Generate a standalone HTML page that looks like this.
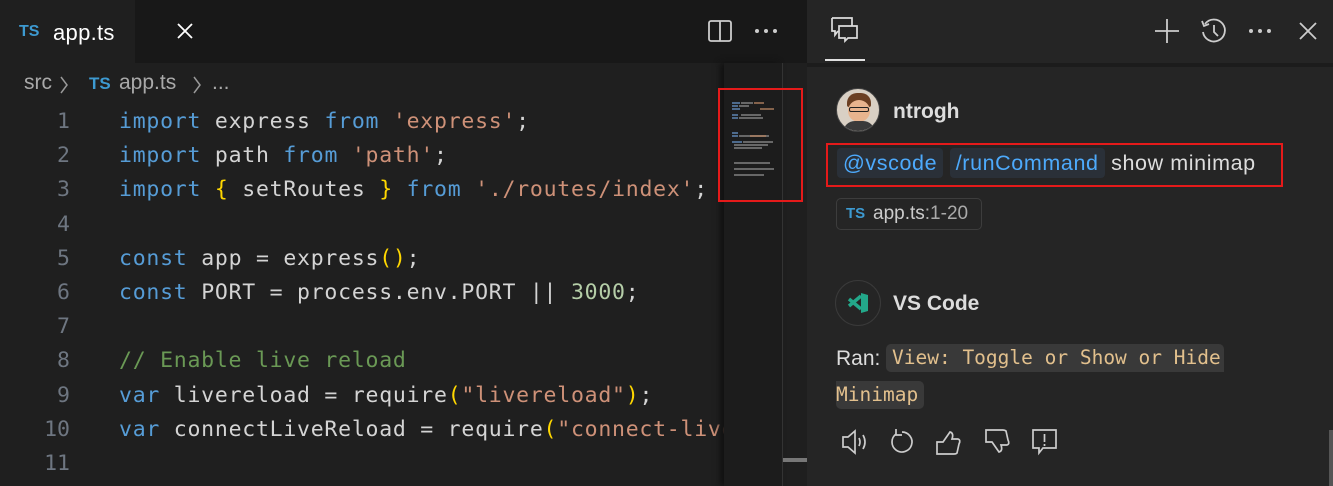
<!DOCTYPE html>
<html><head><meta charset="utf-8"><style>
*{margin:0;padding:0;box-sizing:border-box}
body{width:1333px;height:486px;overflow:hidden;background:#1f1f1f;font-family:"Liberation Sans","DejaVu Sans",sans-serif;position:relative;color:#ccc}
.abs{position:absolute}
.tabbar{left:0;top:0;width:807px;height:63px;background:#181818}
.tab{left:0;top:0;width:135px;height:63px;background:#1f1f1f}
.ts{color:#3d9ad1;font-weight:bold;font-size:16px}
.code{font-family:"DejaVu Sans Mono","Liberation Mono",monospace;font-size:21.5px;white-space:pre;line-height:34.2px}
.k{color:#569cd6}.s{color:#ce9178}.v{color:#d4d4d4}.n{color:#b5cea8}.c{color:#6a9955}.f{color:#dcdcaa}.b{color:#ffd700}.m{color:#da70d6}
.chat{left:807px;top:0;width:526px;height:486px;background:#252525}
.pill{background:#2a3038;color:#4daafc;border-radius:4px;padding:3px 6px}
.mono{font-family:"DejaVu Sans Mono","Liberation Mono",monospace}
.bc{font-size:21px;color:#a9a9a9;top:71px}
</style></head><body>
<div class="abs tabbar"></div>
<div class="abs tab"></div>
<div class="abs ts" style="left:19px;top:23px">TS</div>
<div class="abs" style="left:53px;top:20px;font-size:22px;color:#fff;letter-spacing:0.3px">app.ts</div>
<svg class="abs" style="left:176px;top:22px" width="18" height="18"><path d="M2 2L16 16M16 2L2 16" stroke="#fff" stroke-width="1.8"/></svg>
<svg class="abs" style="left:708px;top:20px" width="24" height="22"><rect x="1" y="1" width="22" height="20" rx="2" fill="none" stroke="#ccc" stroke-width="1.8"/><path d="M12 1V21" stroke="#ccc" stroke-width="1.8"/></svg>
<svg class="abs" style="left:754px;top:28px" width="26" height="6" fill="#ccc"><circle cx="3" cy="3" r="2"/><circle cx="12" cy="3" r="2"/><circle cx="21" cy="3" r="2"/></svg>
<div class="abs bc" style="left:24px">src</div>
<svg class="abs" style="left:58px;top:74px" width="12" height="22"><path d="M3 3L9 11L3 19" fill="none" stroke="#999" stroke-width="1.5"/></svg>
<div class="abs ts" style="left:89px;top:74px;font-size:17px">TS</div>
<div class="abs bc" style="left:119px">app.ts</div>
<svg class="abs" style="left:191px;top:74px" width="12" height="22"><path d="M3 3L9 11L3 19" fill="none" stroke="#999" stroke-width="1.5"/></svg>
<div class="abs bc" style="left:212px">...</div>
<div class="abs code" style="left:30px;top:105px;width:40px;text-align:right;color:#6e7681">1
2
3
4
5
6
7
8
9
10
11</div>
<div class="abs code" style="left:119px;top:105px;width:605px;overflow:hidden;letter-spacing:0.75px"><span class="k">import</span> <span class="v">express</span> <span class="k">from</span> <span class="s">'express'</span><span class="v">;</span>
<span class="k">import</span> <span class="v">path</span> <span class="k">from</span> <span class="s">'path'</span><span class="v">;</span>
<span class="k">import</span> <span class="b">{</span> <span class="v">setRoutes</span> <span class="b">}</span> <span class="k">from</span> <span class="s">'./routes/index'</span><span class="v">;</span>

<span class="k">const</span> <span class="v">app = express</span><span class="b">()</span><span class="v">;</span>
<span class="k">const</span> <span class="v">PORT = process.env.PORT || </span><span class="n">3000</span><span class="v">;</span>

<span class="c">// Enable live reload</span>
<span class="k">var</span> <span class="v">livereload = require</span><span class="b">(</span><span class="s">"livereload"</span><span class="b">)</span><span class="v">;</span>
<span class="k">var</span> <span class="v">connectLiveReload = require</span><span class="b">(</span><span class="s">"connect-live</span>
</div>
<div class="abs" style="left:724px;top:63px;width:58px;height:423px;background:#1c1c1c;box-shadow:-4px 0 6px #111"></div>
<div class="abs" style="left:782px;top:63px;width:1px;height:423px;background:#333"></div>
<div class="abs" style="left:783px;top:458px;width:24px;height:4px;background:#777"></div>
<svg class="abs" style="left:730px;top:100px" width="50" height="80">
<g fill="#5a7ea8" opacity=".8"><rect x="2" y="2" width="8" height="2"/><rect x="2" y="5" width="6" height="2"/><rect x="2" y="8" width="8" height="2"/><rect x="2" y="14" width="6" height="2"/><rect x="2" y="17" width="6" height="2"/><rect x="2" y="32" width="6" height="2"/><rect x="2" y="35" width="6" height="2"/><rect x="2" y="41" width="10" height="2"/></g>
<g fill="#999" opacity=".6"><rect x="11" y="2" width="12" height="2"/><rect x="9" y="5" width="10" height="2"/><rect x="11" y="14" width="20" height="2"/><rect x="9" y="17" width="24" height="2"/><rect x="9" y="35" width="30" height="2"/><rect x="13" y="41" width="30" height="2"/><rect x="4" y="44" width="34" height="2"/><rect x="4" y="47" width="28" height="2"/><rect x="4" y="62" width="36" height="2"/><rect x="4" y="68" width="40" height="2"/><rect x="4" y="74" width="30" height="2"/></g>
<g fill="#b08060" opacity=".7"><rect x="24" y="2" width="10" height="2"/><rect x="30" y="8" width="14" height="2"/><rect x="20" y="35" width="16" height="2"/></g>
</svg>
<div class="abs" style="left:718px;top:88px;width:85px;height:114px;border:2.5px solid #e51a1a"></div>

<div class="abs chat"></div>
<div class="abs" style="left:807px;top:63px;width:526px;height:4px;background:#1c1c1c"></div>
<svg class="abs" style="left:830px;top:16px" width="30" height="28"><path d="M2 2H22V10M2 2V15H5V19L8 15" fill="none" stroke="#ddd" stroke-width="1.7"/><path d="M9 10H27V22H18L15 25V22H9Z" fill="none" stroke="#ddd" stroke-width="1.7"/></svg>
<div class="abs" style="left:825px;top:59px;width:40px;height:2px;background:#e0e0e0"></div>
<svg class="abs" style="left:1154px;top:18px" width="26" height="26"><path d="M13 1V25M1 13H25" stroke="#ccc" stroke-width="1.8"/></svg>
<svg class="abs" style="left:1199px;top:16px" width="30" height="30"><path d="M6 8A11 11 0 1 1 4 16" fill="none" stroke="#ccc" stroke-width="1.8"/><path d="M3 5L5 10L10 8" fill="none" stroke="#ccc" stroke-width="1.8"/><path d="M15 9V16L19 20" fill="none" stroke="#ccc" stroke-width="1.8"/></svg>
<svg class="abs" style="left:1248px;top:28px" width="26" height="6" fill="#ccc"><circle cx="3" cy="3" r="2"/><circle cx="12" cy="3" r="2"/><circle cx="21" cy="3" r="2"/></svg>
<svg class="abs" style="left:1298px;top:21px" width="20" height="20"><path d="M2 2L18 18M18 2L2 18" stroke="#ccc" stroke-width="1.8"/></svg>

<div class="abs" style="left:836px;top:88px;width:44px;height:44px;border-radius:50%;background:#d9d0c4;overflow:hidden;border:1px solid #444">
<div class="abs" style="left:10px;top:4px;width:24px;height:14px;background:#6b3f22;border-radius:10px 10px 2px 2px"></div>
<div class="abs" style="left:11px;top:11px;width:22px;height:22px;background:#e8b48e;border-radius:50%"></div>
<div class="abs" style="left:12px;top:18px;width:20px;height:5px;border:1.5px solid #222;border-radius:2px"></div>
<div class="abs" style="left:6px;top:32px;width:32px;height:14px;background:#3a3a3a;border-radius:12px 12px 0 0"></div>
</div>
<div class="abs" style="left:893px;top:100px;font-size:21px;font-weight:bold;color:#ddd">ntrogh</div>
<div class="abs" style="left:826px;top:143px;width:457px;height:44px;border:2.5px solid #e51a1a"></div>
<div class="abs" style="left:837px;top:151px;font-size:21.5px;color:#ddd;white-space:nowrap;letter-spacing:0.6px"><span class="pill">@vscode</span> <span class="pill">/runCommand</span> show minimap</div>
<div class="abs" style="left:836px;top:198px;width:146px;height:32px;border:1px solid #3d3d3d;border-radius:5px"></div>
<div class="abs ts" style="left:846px;top:205px;font-size:15px">TS</div>
<div class="abs" style="left:873px;top:203px;font-size:19px;color:#ccc">app.ts<span style="color:#aaa">:1-20</span></div>

<div class="abs" style="left:835px;top:280px;width:46px;height:46px;border-radius:50%;border:1px solid #3a3a3a"></div>
<svg class="abs" style="left:846px;top:292px" width="24" height="22"><path d="M15 1L22 3V19L15 21Z" fill="#23a88a"/><path d="M15 4L3 14M3 7L15 17" stroke="#23a88a" stroke-width="3.5"/></svg>
<div class="abs" style="left:893px;top:292px;font-size:21px;font-weight:bold;color:#ddd">VS Code</div>
<div class="abs" style="left:836px;top:347px;font-size:21px;color:#ddd">Ran:</div>
<div class="abs mono" style="left:886px;top:344px;width:338px;height:28px;background:#393939;border-radius:5px 5px 0 5px"></div>
<div class="abs mono" style="left:836px;top:381px;width:88px;height:28px;background:#393939;border-radius:0 5px 5px 5px"></div>
<div class="abs mono" style="left:892px;top:346px;font-size:19.5px;color:#e2c08d;white-space:nowrap">View: Toggle or Show or Hide</div>
<div class="abs mono" style="left:836px;top:383px;font-size:19.5px;color:#e2c08d">Minimap</div>

<svg class="abs" style="left:840px;top:428px" width="230" height="30" fill="none" stroke="#ccc" stroke-width="1.7">
<path d="M3 9H8L15 3V25L8 19H3Z"/><path d="M19 10Q21 14 19 18M23 7Q27 14 23 21"/>
<path d="M56 6A10 10 0 1 0 62 4"/><path d="M56 1V7H62"/>
<path d="M97 26V14H103L110 4Q114 5 112 11H118Q121 12 119 16L117 25Q116 26 114 26Z"/>
<path d="M151 2V14H157L164 24Q168 23 166 17H172Q175 16 173 12L171 3Q170 2 168 2Z" transform="translate(-5,0)"/>
<path d="M193 2H216V20H203L199 25V20H193Z"/><path d="M204.5 6V14M204.5 16V18"/>
</svg>
<div class="abs" style="left:1329px;top:430px;width:4px;height:56px;background:#555"></div>
</body></html>
